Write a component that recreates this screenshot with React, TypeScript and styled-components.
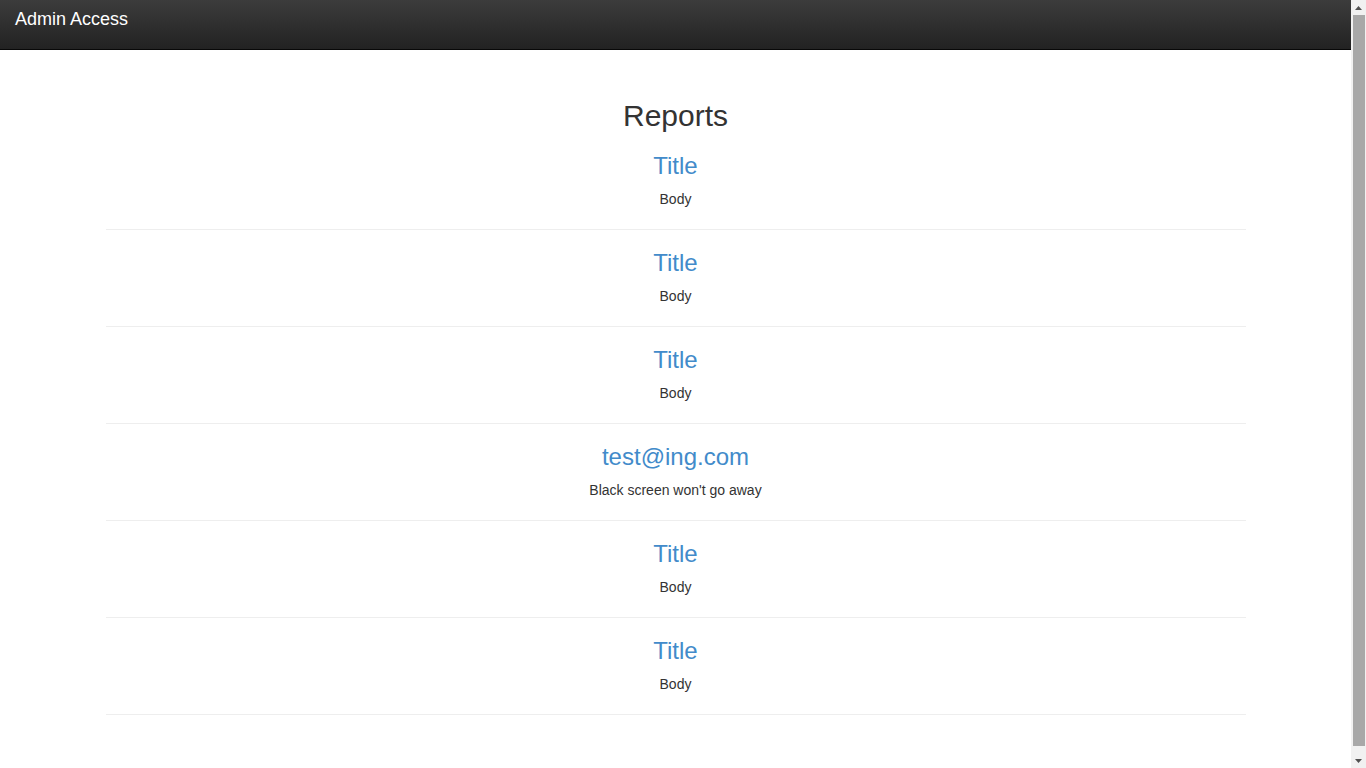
import React from "react";
import styled, { createGlobalStyle } from "styled-components";

const Global = createGlobalStyle`
  html, body { margin: 0; padding: 0; }
  body {
    font-family: "Liberation Sans", Arial, Helvetica, sans-serif;
    font-size: 14px;
    line-height: 1.428571;
    color: #333333;
    background: #ffffff;
  }
  * { box-sizing: border-box; }
`;

const Shell = styled.div`
  display: flex;
  height: 100vh;
  overflow: hidden;
`;

const Page = styled.div`
  flex: 1;
  min-width: 0;
  overflow: hidden;
`;

const Rail = styled.div`
  width: 15px;
  flex: none;
  background: #f1f1f1;
  display: flex;
  flex-direction: column;
`;

const RailButton = styled.div`
  height: 15px;
  flex: none;
  display: flex;
  align-items: center;
  justify-content: center;
`;

const Track = styled.div`
  flex: 1;
  padding: 0 1px 7px 2px;
  display: flex;
`;

const Thumb = styled.div`
  flex: 1;
  background: #a8a8a8;
`;

const Navbar = styled.nav`
  height: 50px;
  background-image: linear-gradient(to bottom, #3c3c3c 0%, #222222 100%);
  border-bottom: 1px solid #080808;
  display: flex;
  align-items: flex-start;
`;

const Brand = styled.a`
  display: block;
  padding: 9px 15px 0;
  font-size: 18px;
  line-height: 20px;
  color: #ffffff;
  text-decoration: none;
`;

const Container = styled.main`
  width: 1170px;
  margin: 0 auto;
  padding: 49px 15px 40px;
  text-align: center;
`;

const Heading = styled.h2`
  margin: 0 0 10px;
  font-size: 30px;
  font-weight: 500;
  line-height: 34px;
  color: #333333;
`;

const ReportTitle = styled.h3`
  margin: 20px 0 10px;
  font-size: 24px;
  font-weight: 500;
  line-height: 26px;
  color: #428bca;
`;

const ReportBody = styled.p`
  margin: 0 0 10px;
  padding-top: 1px;
`;

const Divider = styled.hr`
  margin: 19px 0 20px;
  border: 0;
  border-top: 1px solid #eeeeee;
  height: 0;
`;

const reports = [
  { title: "Title", body: "Body" },
  { title: "Title", body: "Body" },
  { title: "Title", body: "Body" },
  { title: "test@ing.com", body: "Black screen won't go away" },
  { title: "Title", body: "Body" },
  { title: "Title", body: "Body" },
];

const Arrow = ({ up }: { up?: boolean }) => (
  <svg width="9" height="6" viewBox="0 0 9 6">
    <polygon points={up ? "1,5 4.5,1 8,5" : "1,1 8,1 4.5,5"} fill="#505050" />
  </svg>
);

export default function App() {
  return (
    <>
      <Global />
      <Shell>
        <Page>
          <Navbar>
            <Brand href="#">Admin Access</Brand>
          </Navbar>
          <Container>
            <Heading>Reports</Heading>
            {reports.map((r, i) => (
              <div key={i}>
                <ReportTitle>{r.title}</ReportTitle>
                <ReportBody>{r.body}</ReportBody>
                <Divider />
              </div>
            ))}
          </Container>
        </Page>
        <Rail>
          <RailButton>
            <Arrow up />
          </RailButton>
          <Track>
            <Thumb />
          </Track>
          <RailButton>
            <Arrow />
          </RailButton>
        </Rail>
      </Shell>
    </>
  );
}
